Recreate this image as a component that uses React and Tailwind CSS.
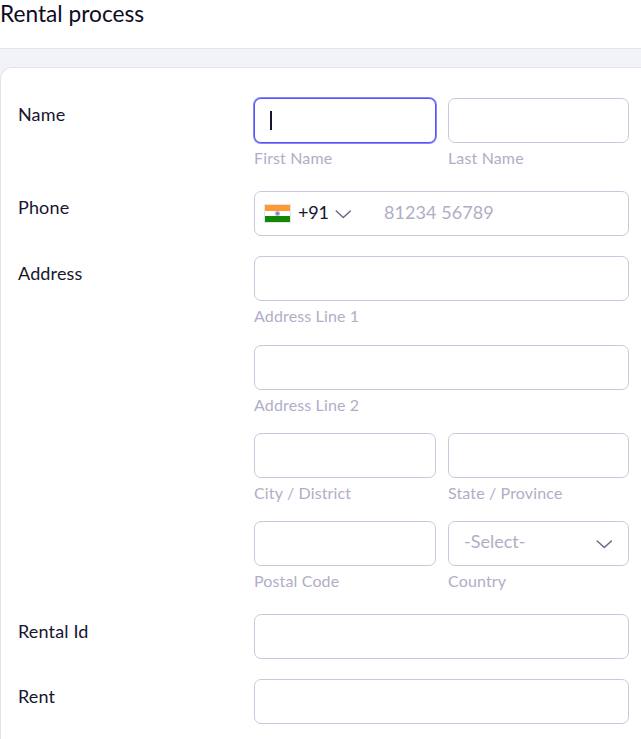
import React from "react";

function Chevron({ className = "" }) {
  return (
    <svg width="16" height="9" viewBox="0 0 16 9" fill="none" className={`shrink-0 ${className}`}>
      <path d="M1.2 0.9L8.3 7.6L15.4 0.9" stroke="currentColor" strokeWidth="1.4" strokeLinejoin="round" strokeLinecap="round" />
    </svg>
  );
}

function Flag() {
  return (
    <svg width="27" height="19" viewBox="0 0 27 19" className="shrink-0">
      <rect width="27" height="19" fill="#e6e6e8" />
      <rect x="1" y="1" width="25" height="6" fill="#ff9933" />
      <rect x="1" y="7" width="25" height="5" fill="#ffffff" />
      <rect x="1" y="12" width="25" height="6" fill="#128807" />
      <circle cx="13.5" cy="9.5" r="2.5" fill="#b3b3dd" />
      <circle cx="13.5" cy="9.5" r="1.3" fill="#7878c2" />
    </svg>
  );
}

function Box({ children, focused = false, className = "" }) {
  return (
    <div
      className={`flex h-[45px] items-center rounded-[7px] border bg-white ${
        focused ? "border-[#5553f5] ring-1 ring-[#5553f5]/70" : "border-[#cac8dc]"
      } ${className}`}
    >
      {children}
    </div>
  );
}

function Field({ caption, children, focused }) {
  return (
    <div className="min-w-0">
      <Box focused={focused}>{children}</Box>
      <div className="h-7 pt-[3px] text-[16px] leading-6 tracking-[0.14px] text-[#b0aec6]">{caption}</div>
    </div>
  );
}

function Row({ label, children, className = "", labelClassName = "pt-1" }) {
  return (
    <div className={`flex ${className}`}>
      <div className={`w-[236px] shrink-0 text-[18px] leading-6 tracking-[0.15px] ${labelClassName}`}>{label}</div>
      <div className="w-[375px] shrink-0">{children}</div>
    </div>
  );
}

function Pair({ children, className = "" }) {
  return <div className={`grid grid-cols-[182px_181px] gap-x-3 ${className}`}>{children}</div>;
}

export default function App() {
  return (
    <div className="flex h-[739px] w-[641px] flex-col overflow-hidden bg-[#f2f3f8] font-['Lato',sans-serif] text-[#17152f]">
      <header className="h-[49px] shrink-0 border-b border-[#e3e3ea] bg-white pt-px text-[22.7px] leading-[26px] text-[#0e0c24]">
        Rental process
      </header>
      <main className="mt-[18px] flex-1 rounded-tl-xl border-t border-l border-[#e4e3ec] bg-white pt-[30px] pl-[17px]">
        <Row label="Name" className="mb-5">
          <Pair>
            <Field caption="First Name" focused>
              <span className="ml-[15px] h-[19px] w-0.5 bg-[#17152f]" />
            </Field>
            <Field caption="Last Name" />
          </Pair>
        </Row>
        <Row label="Phone" className="mb-5">
          <Box className="text-[18px] leading-6">
            <span className="ml-[9px]"><Flag /></span>
            <span className="ml-[7px] w-[31px] pb-[3px] tracking-[-0.2px]">+91</span>
            <Chevron className="ml-1.5 mt-0.5 text-[#686582]" />
            <span className="ml-[33px] pb-[3px] tracking-[0.07px] text-[#b0aec6]">81234 56789</span>
          </Box>
        </Row>
        <Row label="Address" className="mb-5" labelClassName="pt-[5px]">
          <div className="mb-4"><Field caption="Address Line 1" /></div>
          <div className="mb-[15px]"><Field caption="Address Line 2" /></div>
          <Pair className="mb-[15px]">
            <Field caption="City / District" />
            <Field caption="State / Province" />
          </Pair>
          <Pair>
            <Field caption="Postal Code" />
            <Field caption="Country">
              <span className="ml-[15px] flex-1 pb-[5px] text-[18px] leading-6 text-[#b0aec6]">-Select-</span>
              <Chevron className="mr-4 mt-0.5 text-[#686582]" />
            </Field>
          </Pair>
        </Row>
        <Row label="Rental Id" className="mb-5" labelClassName="pt-[5px]"><Box /></Row>
        <Row label="Rent" labelClassName="pt-[5px]"><Box /></Row>
      </main>
    </div>
  );
}
